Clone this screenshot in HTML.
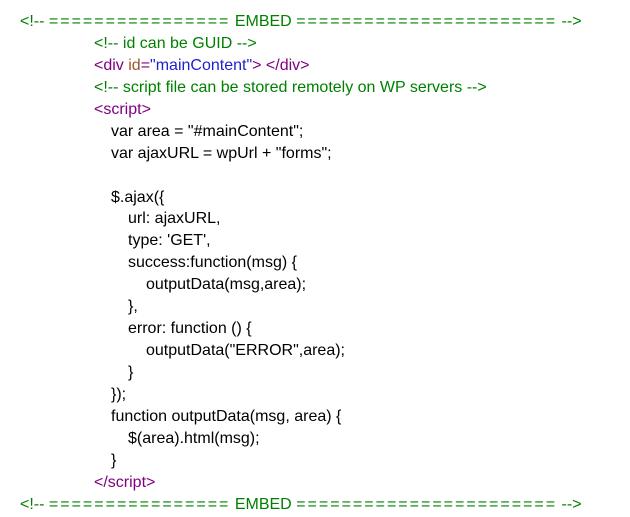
<!DOCTYPE html>
<html><head><style>
body{margin:0;background:#fff;width:630px;height:517px;overflow:hidden}
.c{position:absolute;top:11px;left:0;font-family:"Liberation Sans",sans-serif;font-size:16px;line-height:21.95px;color:#000}
.l{height:21.95px;white-space:pre}
.g{color:#008000}.p{color:#800080}.a{color:#a0522d}.b{color:#2020d0}
.e{letter-spacing:2px}
</style></head><body><div class="c">
<div class="l g" style="padding-left:20px">&lt;!-- <span class="e">================</span> EMBED <span class="e">=======================</span> --&gt;</div>
<div class="l g" style="padding-left:94px">&lt;!-- id can be GUID --&gt;</div>
<div class="l p" style="padding-left:94px">&lt;div <span class="a">id</span>=<span class="b">"mainContent"</span>&gt; &lt;/div&gt;</div>
<div class="l g" style="padding-left:94px">&lt;!-- script file can be stored remotely on WP servers --&gt;</div>
<div class="l p" style="padding-left:94px">&lt;script&gt;</div>
<div class="l" style="padding-left:111px">var area = "#mainContent";</div>
<div class="l" style="padding-left:111px">var ajaxURL = wpUrl + "forms";</div>
<div class="l"></div>
<div class="l" style="padding-left:111px">$.ajax({</div>
<div class="l" style="padding-left:128px">url: ajaxURL,</div>
<div class="l" style="padding-left:128px">type: 'GET',</div>
<div class="l" style="padding-left:128px">success:function(msg) {</div>
<div class="l" style="padding-left:146px">outputData(msg,area);</div>
<div class="l" style="padding-left:128px">},</div>
<div class="l" style="padding-left:128px">error: function () {</div>
<div class="l" style="padding-left:146px">outputData("ERROR",area);</div>
<div class="l" style="padding-left:128px">}</div>
<div class="l" style="padding-left:111px">});</div>
<div class="l" style="padding-left:111px">function outputData(msg, area) {</div>
<div class="l" style="padding-left:128px">$(area).html(msg);</div>
<div class="l" style="padding-left:111px">}</div>
<div class="l p" style="padding-left:94px">&lt;/script&gt;</div>
<div class="l g" style="padding-left:20px">&lt;!-- <span class="e">================</span> EMBED <span class="e">=======================</span> --&gt;</div>
</div></body></html>
